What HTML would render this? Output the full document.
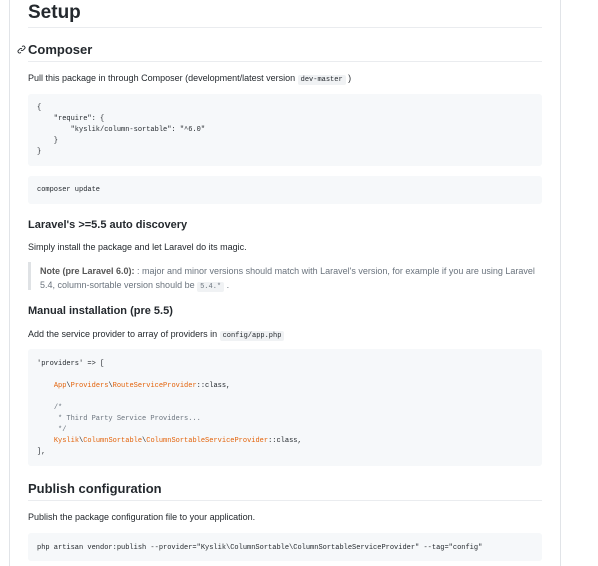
<!DOCTYPE html>
<html><head><style>
body{margin:0;width:598px;height:566px;background:#fff;font-family:"Liberation Sans",sans-serif;color:#24292e;position:relative;overflow:hidden}
.a{position:absolute;white-space:pre}
.bl{position:absolute;left:9px;top:0;width:1px;height:566px;background:#e1e4e8}
.br{position:absolute;left:560px;top:0;width:1px;height:566px;background:#e1e4e8}
.hr{position:absolute;left:28px;width:514px;height:1px;background:#eaecef}
.cb{position:absolute;left:28px;width:514px;background:#f6f8fa;border-radius:3px}
.m{font-family:"Liberation Mono",monospace;font-size:7px;color:#24292e}
.p{font-size:9px}
.ic{background:#f0f2f4;border-radius:2px;padding:1px 3px;font-family:"Liberation Mono",monospace;font-size:7px}
.o{color:#e36209}
.c{color:#6a737d}
h{font-weight:600}
</style></head><body>
<div class="bl"></div><div class="br"></div>
<div class="a" style="left:28px;top:2px;font-size:19px;font-weight:bold">Setup</div>
<div class="hr" style="top:27px"></div>
<svg class="a" style="left:17px;top:45px" width="9" height="9" viewBox="0 0 16 16"><path d="M7 9a3 3 0 0 0 4 0l3-3a3 3 0 0 0-4-4L9 3M9 7a3 3 0 0 0-4 0L2 10a3 3 0 0 0 4 4l1-1" fill="none" stroke="#24292e" stroke-width="1.6"/></svg>
<div class="a" style="left:28px;top:42px;font-size:13px;font-weight:bold">Composer</div>
<div class="hr" style="top:61px"></div>
<div class="a p" style="left:28px;top:73px">Pull this package in through Composer (development/latest version <span class="ic">dev-master</span> )</div>
<div class="cb" style="top:94px;height:72px"></div>
<div class="a m" style="left:37px;top:103px;line-height:11px">{
    "require": {
        "kyslik/column-sortable": "^6.0"
    }
}</div>
<div class="cb" style="top:176px;height:28px"></div>
<div class="a m" style="left:37px;top:186px">composer update</div>
<div class="a" style="left:28px;top:219px;font-size:11px;font-weight:bold">Laravel's &gt;=5.5 auto discovery</div>
<div class="a p" style="left:28px;top:242px">Simply install the package and let Laravel do its magic.</div>
<div class="a" style="left:28px;top:262px;width:3px;height:28px;background:#dfe2e5"></div>
<div class="a p" style="left:40px;top:264px;color:#6a737d;line-height:14px"><b style="color:#555">Note (pre Laravel 6.0):</b> : major and minor versions should match with Laravel's version, for example if you are using Laravel
5.4, column-sortable version should be <span class="ic">5.4.*</span> .</div>
<div class="a" style="left:28px;top:305px;font-size:11px;font-weight:bold">Manual installation (pre 5.5)</div>
<div class="a p" style="left:28px;top:329px">Add the service provider to array of providers in <span class="ic">config/app.php</span></div>
<div class="cb" style="top:349px;height:117px"></div>
<div class="a m" style="left:37px;top:359px;line-height:11px">'providers' =&gt; [

    <span class="o">App</span>\<span class="o">Providers</span>\<span class="o">RouteServiceProvider</span>::class,

    <span class="c">/*
     * Third Party Service Providers...
     */</span>
    <span class="o">Kyslik</span>\<span class="o">ColumnSortable</span>\<span class="o">ColumnSortableServiceProvider</span>::class,
],</div>
<div class="a" style="left:28px;top:481px;font-size:13px;font-weight:bold">Publish configuration</div>
<div class="hr" style="top:500px"></div>
<div class="a p" style="left:28px;top:512px">Publish the package configuration file to your application.</div>
<div class="cb" style="top:533px;height:28px"></div>
<div class="a m" style="left:37px;top:544px">php artisan vendor:publish --provider="Kyslik\ColumnSortable\ColumnSortableServiceProvider" --tag="config"</div>
</body></html>
